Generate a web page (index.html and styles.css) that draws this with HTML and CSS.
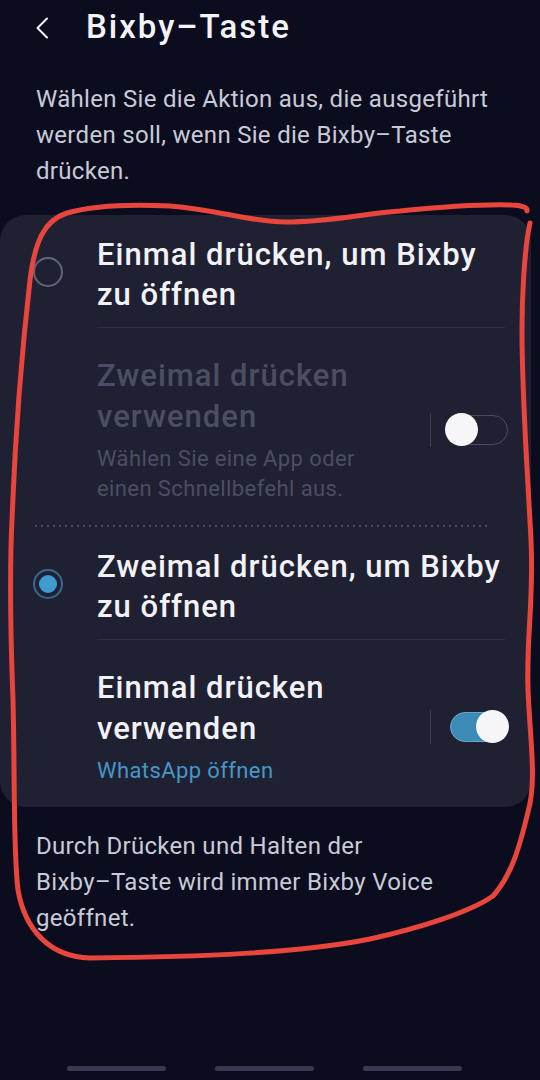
FILE: index.html
```html
<!DOCTYPE html>
<html lang="de">
<head>
  <meta charset="UTF-8">
  <title>Bixby-Taste</title>
  <link rel="stylesheet" href="styles.css">
</head>
<body>
  <div class="page">
    <header class="topbar">
      <svg class="back" width="14" height="22" viewBox="0 0 14 22">
        <path d="M12 1.5 L2.5 11 L12 20.5" fill="none" stroke="#f2f2f6" stroke-width="2" stroke-linecap="round" stroke-linejoin="round"/>
      </svg>
      <h1>Bixby–Taste</h1>
    </header>

    <p class="intro">Wählen Sie die Aktion aus, die ausgeführt werden soll, wenn Sie die Bixby&#8288;–&#8288;Taste drücken.</p>

    <div class="card">
      <div class="row radio-row">
        <span class="radio"></span>
        <div class="row-title">Einmal drücken, um Bixby zu öffnen</div>
      </div>
      <div class="divider"></div>
      <div class="row switch-row disabled">
        <div class="row-text">
          <div class="row-title">Zweimal drücken verwenden</div>
          <div class="row-sub">Wählen Sie eine App oder einen Schnellbefehl aus.</div>
        </div>
        <span class="vline"></span>
        <span class="switch"></span>
      </div>

      <div class="dots"></div>

      <div class="row radio-row">
        <span class="radio checked"></span>
        <div class="row-title">Zweimal drücken, um Bixby zu öffnen</div>
      </div>
      <div class="divider"></div>
      <div class="row switch-row">
        <div class="row-text">
          <div class="row-title">Einmal drücken verwenden</div>
          <div class="row-sub link">WhatsApp öffnen</div>
        </div>
        <span class="vline"></span>
        <span class="switch on"></span>
      </div>
    </div>

    <p class="note">Durch Drücken und Halten der Bixby&#8288;–&#8288;Taste wird immer Bixby Voice geöffnet.</p>

    <nav class="navbar">
      <span></span>
      <span></span>
      <span></span>
    </nav>

    <!-- hand drawn marker around the options -->
    <svg class="scribble" width="540" height="1080" viewBox="0 0 540 1080">
      <path d="M530 223
               C524 250, 522 300, 522 330
               C522 400, 528 480, 531 540
               C534 600, 526 640, 528 690
               C530 740, 537 780, 528 812
               C520 845, 512 875, 493 896
               C470 912, 420 928, 370 939
               C300 953, 200 957, 90 958
               C50 957, 25 930, 18 890
               C13 850, 15 780, 13 700
               C10 620, 10 560, 12 520
               C15 440, 22 350, 30 280
               C35 240, 45 220, 67 213
               C95 205, 130 204, 170 206
               C220 210, 250 222, 285 222
               C330 222, 360 214, 400 211
               C440 207, 480 204, 512 205
               C522 205, 528 208, 527 211"
            fill="none" stroke="#e8453c" stroke-width="5" stroke-linecap="round" stroke-linejoin="round"/>
    </svg>
  </div>
</body>
</html>
```

FILE: styles.css
```css
html, body {
  margin: 0;
  padding: 0;
  background: #0b0d1f;
}
body {
  font-family: Roboto, "Noto Sans", sans-serif;
  color: #f2f2f6;
}
.page {
  position: relative;
  width: 540px;
  min-height: 1080px;
  display: flex;
  flex-direction: column;
  overflow: hidden;
}

/* Top bar */
.topbar {
  display: flex;
  align-items: center;
  padding: 7px 0 0 35px;
  height: 40px;
}
.back {
  display: block;
  margin-top: 1px;
}
.topbar h1 {
  margin: 0 0 0 37px;
  font-size: 33px;
  line-height: 40px;
  font-weight: 500;
  letter-spacing: 2px;
  color: #f4f4f8;
}

.intro,
.note {
  margin: 0;
  padding: 0 44px 0 36px;
  font-size: 24px;
  line-height: 36px;
  letter-spacing: 0.3px;
  color: #c9cad8;
}
.intro {
  margin-top: 34px;
}

/* Settings card */
.card {
  margin: 26px 9px 0 0;
  background: #1f2132;
  border-radius: 26px;
}
.row {
  display: flex;
  align-items: center;
}
.row-title {
  font-size: 31px;
  line-height: 40px;
  font-weight: 500;
  letter-spacing: 1px;
  color: #f2f2f6;
}
.row-sub {
  margin-top: 7px;
  font-size: 22px;
  line-height: 30px;
  letter-spacing: 0.4px;
  color: #4b4e63;
}
.row-sub.link {
  color: #4597c8;
}
.disabled .row-title {
  color: #4b4e63;
}

.radio-row {
  padding: 20px 26px 12px 33px;
  gap: 34px;
}
.radio {
  flex: none;
  width: 30px;
  height: 30px;
  margin-top: -7px;
  box-sizing: border-box;
  border: 2px solid #61647a;
  border-radius: 50%;
  display: flex;
  align-items: center;
  justify-content: center;
}
.radio.checked {
  border-color: #36698a;
}
.radio.checked::after {
  content: "";
  width: 18px;
  height: 18px;
  border-radius: 50%;
  background: #3f9ad0;
}

.switch-row {
  padding: 27px 23px 21px 97px;
}
.switch-row .row-title {
  line-height: 41px;
}
.row-text {
  flex: 1;
}
.vline {
  flex: none;
  width: 1px;
  height: 34px;
  margin: 0 19px 0 25px;
  background: #3a3d50;
}
.switch {
  flex: none;
  position: relative;
  width: 58px;
  height: 30px;
  box-sizing: border-box;
  border: 1.5px solid #4a4d61;
  border-radius: 16px;
}
.switch::after {
  content: "";
  position: absolute;
  top: 50%;
  left: -6px;
  width: 33px;
  height: 33px;
  margin-top: -16.5px;
  border-radius: 50%;
  background: #f6f6f8;
}
.switch.on {
  background: #3b8bb6;
  border-color: #68a8cf;
}
.switch.on::after {
  left: auto;
  right: -2px;
}

.divider {
  height: 1px;
  margin: 0 26px 0 97px;
  background: #2e3143;
}
.dots {
  height: 2px;
  margin: 0 40px 0 35px;
  background: repeating-linear-gradient(90deg, #474a5c 0 2px, transparent 2px 6px);
}

.note {
  margin-top: 21px;
}

/* Gesture bar at the bottom */
.navbar {
  margin-top: auto;
  display: flex;
  gap: 49px;
  padding: 0 0 9px 67px;
}
.navbar span {
  width: 99px;
  height: 5px;
  border-radius: 3px;
  background: #363950;
}

.scribble {
  position: absolute;
  top: 0;
  left: 0;
  pointer-events: none;
}
```
